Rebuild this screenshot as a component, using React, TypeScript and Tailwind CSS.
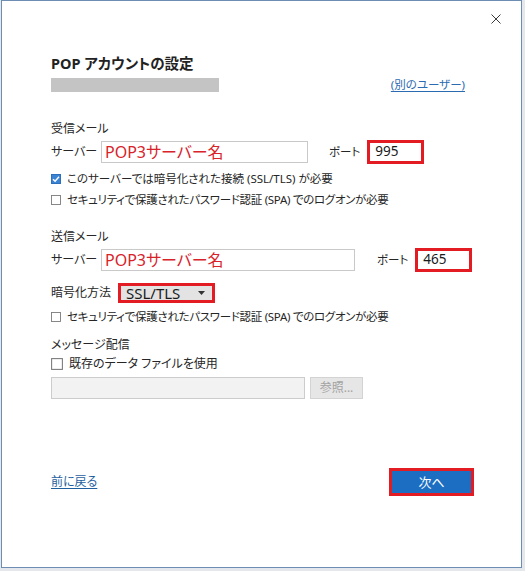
import React from "react";

const jp = "font-['Noto_Sans','Noto_Sans_CJK_JP',sans-serif] [font-feature-settings:'palt']";

function CheckBox({ checked = false, size = 10 }: { checked?: boolean; size?: number }) {
  return (
    <svg width={size} height={size} viewBox="0 0 10 10" className="shrink-0">
      {checked ? (
        <>
          <rect x="0.5" y="0.5" width="9" height="9" fill="#3b84d4" stroke="#2c6fbd" />
          <path d="M2 5.2 L4.1 7.2 L8 2.8" fill="none" stroke="#fff" strokeWidth="1.4" />
        </>
      ) : (
        <rect x="0.5" y="0.5" width="9" height="9" fill="#fff" stroke="#7b7b7b" strokeWidth="0.9" />
      )}
    </svg>
  );
}

function PortBox({ value }: { value: string }) {
  return (
    <div className="flex h-[24px] w-[57px] items-center border-[3px] border-[#e31b23] bg-white pl-[5px] text-[13.5px] leading-none text-[#1a1a1a]">
      {value}
    </div>
  );
}

function ServerRow({ inputWidth, portGap, port }: { inputWidth: number; portGap: number; port: string }) {
  return (
    <div className="flex h-[24px] items-center">
      <span className="w-[50px] text-[12px] leading-[16px]">{"サーバー"}</span>
      <div
        className="flex h-[22px] items-center border border-[#c9c9c9] bg-white pl-[3px] text-[16px] leading-none text-[#d8232a]"
        style={{ width: inputWidth }}
      >
        {"POP3サーバー名"}
      </div>
      <span className="text-[11.5px] leading-[16px]" style={{ marginLeft: portGap }}>
        {"ポート"}
      </span>
      <div className="ml-[7px]">
        <PortBox value={port} />
      </div>
    </div>
  );
}

export default function App() {
  return (
    <div className={`h-[571px] w-[525px] overflow-hidden bg-[#e4e7eb] ${jp} text-[#262626]`}>
      <div className="ml-[1px] flex h-[568px] w-[521px] flex-col border border-[#6d8db2] bg-white">
        {/* close */}
        <div className="flex justify-end pr-[20px] pt-[13px]">
          <svg width="10" height="10" viewBox="0 0 10 10">
            <path d="M0.5 0.5 L9.5 9.5 M9.5 0.5 L0.5 9.5" stroke="#3a3a3a" strokeWidth="1" />
          </svg>
        </div>

        <div className="flex flex-col pl-[49px]">
          <h1 className="mt-[29px] text-[14.5px] font-bold leading-[20px] text-[#222]">{"POP アカウントの設定"}</h1>

          <div className="mt-[5px] flex h-[14px] w-[414px] items-center justify-between">
            <div className="h-[14px] w-[168px] bg-[#c4c4c4]" />
            <a className="text-[11.5px] leading-[14px] text-[#2a6bb2] underline underline-offset-2">{"(別のユーザー)"}</a>
          </div>

          <p className="mt-[29px] text-[12px] leading-[16px]">{"受信メール"}</p>
          <div className="mt-[3px]">
            <ServerRow inputWidth={207} portGap={21} port="995" />
          </div>
          <div className="mt-[7px] flex h-[16px] items-center gap-[6px]">
            <CheckBox checked />
            <span className="text-[11.5px] leading-[16px]">{"このサーバーでは暗号化された接続 (SSL/TLS) が必要"}</span>
          </div>
          <div className="mt-[5px] flex h-[16px] items-center gap-[6px]">
            <CheckBox />
            <span className="text-[11.5px] leading-[16px] tracking-[-0.3px]">{"セキュリティで保護されたパスワード認証 (SPA) でのログオンが必要"}</span>
          </div>

          <p className="mt-[21px] text-[12px] leading-[16px]">{"送信メール"}</p>
          <div className="mt-[3px]">
            <ServerRow inputWidth={254} portGap={22} port="465" />
          </div>

          <div className="mt-[11px] flex h-[20px] items-center">
            <span className="w-[67px] text-[12px] leading-[16px]">{"暗号化方法"}</span>
            <div className="flex h-[20px] w-[97px] items-center border-[3px] border-[#e31b23] bg-[#e3e3e3] pl-[5px] pr-[7px]">
              <span className="text-[15px] leading-none text-[#1a1a1a]">{"SSL/TLS"}</span>
              <svg width="7" height="4" viewBox="0 0 7 4" className="ml-auto">
                <path d="M0 0 H7 L3.5 4 Z" fill="#333" />
              </svg>
            </div>
          </div>
          <div className="mt-[6px] flex h-[16px] items-center gap-[6px]">
            <CheckBox />
            <span className="text-[11.5px] leading-[16px] tracking-[-0.3px]">{"セキュリティで保護されたパスワード認証 (SPA) でのログオンが必要"}</span>
          </div>

          <p className="mt-[12px] text-[12px] leading-[16px]">{"メッセージ配信"}</p>
          <div className="mt-[3px] flex h-[16px] items-center gap-[6px]">
            <CheckBox size={12} />
            <span className="text-[12px] leading-[16px]">{"既存のデータ ファイルを使用"}</span>
          </div>
          <div className="mt-[5px] flex h-[22px] items-center gap-[5px]">
            <div className="h-[22px] w-[254px] border border-[#cccccc] bg-[#f2f2f2]" />
            <div className="flex h-[22px] w-[53px] items-center justify-center border border-[#d3d3d3] bg-[#e6e6e6] text-[12px] leading-none text-[#a3a3a3]">
              {"参照..."}
            </div>
          </div>
        </div>

        <div className="mt-[69px] flex h-[28px] items-center justify-between pl-[49px] pr-[47px]">
          <a className="text-[12px] leading-[16px] text-[#1f5f9f] underline underline-offset-2">{"前に戻る"}</a>
          <div className="flex h-[28px] w-[85px] items-center justify-center border-[3px] border-[#e31b23] bg-[#1b6ec2]">
            <span className="text-[13px] leading-none text-white">{"次へ"}</span>
          </div>
        </div>
      </div>
    </div>
  );
}
